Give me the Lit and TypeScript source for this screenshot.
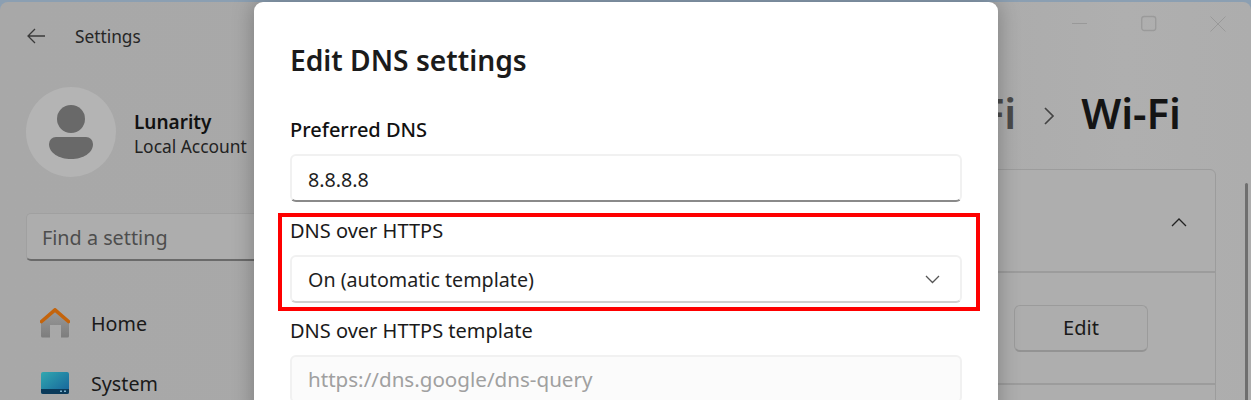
import { LitElement, html, css } from "lit";
import { customElement } from "lit/decorators.js";

@customElement("app-root")
export class AppRoot extends LitElement {
  static styles = css`
    :host { display: block; width: 1251px; height: 400px; overflow: hidden; position: relative; background: #8b9fb2; font-family: "Noto Sans", "Open Sans", sans-serif; color: #1a1a1a; }
    .window { margin-top: 2px; height: 398px; border-radius: 8px 8px 0 0; background: linear-gradient(90deg, #a8a8a8 0%, #a9a9a9 70%, #afafaf 90%, #adadad 100%); position: relative; overflow: hidden; }
    .titlebar { height: 68px; display: flex; align-items: center; padding-left: 27px; box-sizing: border-box; }
    .titlebar .back { width: 18px; height: 16px; margin-right: 30px; display: block; }
    .titlebar .t { font-size: 17.3px; color: #262626; }
    .controls { position: absolute; top: 0; right: 0; display: flex; align-items: center; }
    .controls svg { display: block; }
    .ctl1, .ctl2 { margin-right: 53px; }
    .ctl3 { margin-right: 25px; }
    .body { display: flex; }
    .side { width: 254px; flex: none; padding-left: 26px; box-sizing: border-box; }
    .profile { display: flex; align-items: center; margin-top: 17px; gap: 18px; height: 90px; white-space: nowrap; }
    .avatar { width: 90px; height: 90px; border-radius: 50%; background: #b4b4b4; flex: none; display: flex; align-items: center; justify-content: center; }
    .ptext { padding-top: 4px; }
    .pname { font-size: 19px; font-weight: 600; color: #111; line-height: 24px; }
    .pacct { font-size: 17.4px; color: #222; line-height: 24px; margin-top: 0; }
    .search { margin-top: 36px; width: 240px; height: 48px; box-sizing: border-box; border: 1px solid #a0a0a0; border-bottom: 2px solid #6a6a6a; border-right: none; border-radius: 5px 0 0 5px; background: #adadad; padding-left: 15px; padding-top: 2px; display: flex; align-items: center; font-size: 19.8px; color: #4d4d4d; }
    .nav { margin-top: 32px; padding-left: 14px; }
    .item { height: 60px; display: flex; align-items: center; gap: 21px; font-size: 19.7px; color: #1a1a1a; }
    .item svg { width: 30px; height: 30px; flex: none; display: block; }
    .crumb { position: absolute; top: 86px; right: 70px; display: flex; align-items: center; white-space: nowrap; line-height: 50px; }
    .crumb .prev { font-size: 42px; font-weight: 600; color: #4a4a4a; }
    .crumb .cur { font-size: 42px; font-weight: 600; color: #141414; }
    .crumb svg { margin: 6px 26px 0 28px; display: block; }
    .card { position: absolute; top: 167px; right: 35px; width: 300px; height: 260px; box-sizing: border-box; border: 1px solid #9c9c9c; border-radius: 6px; background: #aeaeae; }
    .row1 { height: 103px; border-bottom: 2px solid #9c9c9c; display: flex; justify-content: flex-end; align-items: center; padding-right: 28px; padding-top: 2px; box-sizing: border-box; }
    .row2 { height: 112px; border-bottom: 2px solid #9c9c9c; box-sizing: border-box; display: flex; justify-content: flex-end; align-items: center; padding-right: 67px; }
    .btn { width: 134px; height: 47px; box-sizing: border-box; border: 1px solid #9b9b9b; border-bottom: 2px solid #939393; border-radius: 6px; background: #adadad; font-size: 20px; color: #1a1a1a; display: flex; align-items: center; justify-content: center; }
    .scroll { position: absolute; right: 3px; top: 181px; width: 3px; height: 260px; background: #6f6f6f; border-radius: 2px; }
    .dialog { position: absolute; left: 254px; top: 2px; width: 744px; height: 420px; box-sizing: border-box; background: #fff; border-radius: 9px 9px 0 0; box-shadow: 0 0 22px rgba(0,0,0,0.28); padding: 0 36px; }
    h1 { margin: 0; font-size: 28.2px; font-weight: 600; color: #1b1b1b; line-height: 38px; padding-top: 39px; }
    .lbl { font-size: 20px; line-height: 24px; color: #1a1a1a; white-space: nowrap; }
    .lbl.b { font-weight: 500; color: #111; }
    .field { height: 48px; box-sizing: border-box; border: 2px solid #f1f1f1; border-bottom: 2px solid #8a8a8a; border-radius: 6px; background: #fff; padding-left: 16px; padding-top: 3px; display: flex; align-items: center; justify-content: space-between; font-size: 19.7px; color: #1f1f1f; }
    .field.sel { border-bottom-color: #d0d0d0; padding-right: 20px; padding-top: 0; }
    .field.dis { border-bottom-color: #f1f1f1; background: #fbfbfb; color: #a0a0a0; padding-top: 0; font-size: 20.6px; }
    .first { margin-top: 39px; margin-bottom: 12px; }
    .gap { margin-top: 12px; }
    .hl { position: relative; margin-top: 17px; }
    .hl::before { content: ""; position: absolute; left: -12px; right: -18px; top: -6px; bottom: -8px; border: 4px solid #fe0000; pointer-events: none; }
    .next { margin-top: 16px; }
  `;

  render() {
    return html`
      <div class="window">
        <div class="titlebar">
          <svg class="back" viewBox="0 0 18 16" fill="none" stroke="#3a3a3a" stroke-width="1.3"><path d="M18 8H1M8 1 1 8l7 7"/></svg>
          <span class="t">Settings</span>
        </div>
        <div class="controls">
          <svg class="ctl1" width="16" height="44" viewBox="0 0 16 44"><path d="M0 21.500h15" stroke="#999" stroke-width="1"/></svg>
          <svg class="ctl2" width="16" height="44" viewBox="0 0 16 44"><rect x=".75" y="14.500" width="14" height="14" rx="2.500" fill="none" stroke="#9a9a9a" stroke-width="1.300"/></svg>
          <svg class="ctl3" width="16" height="44" viewBox="0 0 16 44"><path d="M.5 14.500l15 15M15.500 14.500l-15 15" stroke="#999"/></svg>
        </div>
        <div class="body">
          <div class="side">
            <div class="profile">
              <div class="avatar">
                <svg width="44" height="54" viewBox="0 0 44 54"><circle cx="22" cy="14" r="14" fill="#696969"/><path d="M0 39a7 7 0 0 1 7-7h30a7 7 0 0 1 7 7c0 9-10 15-22 15S0 48 0 39Z" fill="#696969"/></svg>
              </div>
              <div class="ptext">
                <div class="pname">Lunarity</div>
                <div class="pacct">Local Account</div>
              </div>
            </div>
            <div class="search">Find a setting</div>
            <div class="nav">
              <div class="item">
                <svg viewBox="0 0 30 30"><defs><linearGradient id="h" x1="0" y1="0" x2="0" y2="1"><stop offset="0" stop-color="#9c9c9c"/><stop offset="1" stop-color="#7d7d7d"/></linearGradient></defs><path fill-rule="evenodd" d="M1 13 15 1l14 12v15a1.500 1.500 0 0 1-1.500 1.500H21V17H10v12.500H2.500A1.500 1.500 0 0 1 1 28Z" fill="url(#h)"/><path d="M1.500 13.500 15 1.800l13.500 11.700" fill="none" stroke="#c4640c" stroke-width="3.600" stroke-linejoin="round" stroke-linecap="round"/></svg>
                <span>Home</span>
              </div>
              <div class="item">
                <svg viewBox="0 0 30 30"><defs><linearGradient id="s" x1="0" y1="0" x2="1" y2="1"><stop offset="0" stop-color="#31a8b0"/><stop offset="1" stop-color="#15609a"/></linearGradient></defs><rect x="1" y="4" width="28" height="22" rx="2" fill="url(#s)"/><path d="M1 21h28v3a2 2 0 0 1-2 2H3a2 2 0 0 1-2-2Z" fill="#0a3a5a"/><path d="M20 22.500h2v1.500h-2zM24 22.500h2v1.500h-2z" fill="#7fb4cf"/></svg>
                <span>System</span>
              </div>
            </div>
          </div>
        </div>
        <div class="crumb">
          <span class="prev">Wi-Fi</span>
          <svg width="11" height="18" viewBox="0 0 11 18" fill="none" stroke="#444" stroke-width="1.700"><path d="M1 1l8 8-8 8"/></svg>
          <span class="cur">Wi-Fi</span>
        </div>
        <div class="card">
          <div class="row1"><svg width="16" height="10" viewBox="0 0 16 10" fill="none" stroke="#222" stroke-width="1.300"><path d="M1 9l7-7 7 7"/></svg></div>
          <div class="row2"><div class="btn">Edit</div></div>
        </div>
        <div class="scroll"></div>
      </div>
      <div class="dialog">
        <h1>Edit DNS settings</h1>
        <div class="lbl b first">Preferred DNS</div>
        <div class="field">8.8.8.8</div>
        <div class="hl">
          <div class="lbl">DNS over HTTPS</div>
          <div class="field sel gap">
            <span>On (automatic template)</span>
            <svg width="15" height="9" viewBox="0 0 15 9" fill="none" stroke="#555" stroke-width="1.300"><path d="M1 1l6.500 6.500L14 1"/></svg>
          </div>
        </div>
        <div class="lbl next">DNS over HTTPS template</div>
        <div class="field dis gap">https://dns.google/dns-query</div>
      </div>
    `;
  }
}
